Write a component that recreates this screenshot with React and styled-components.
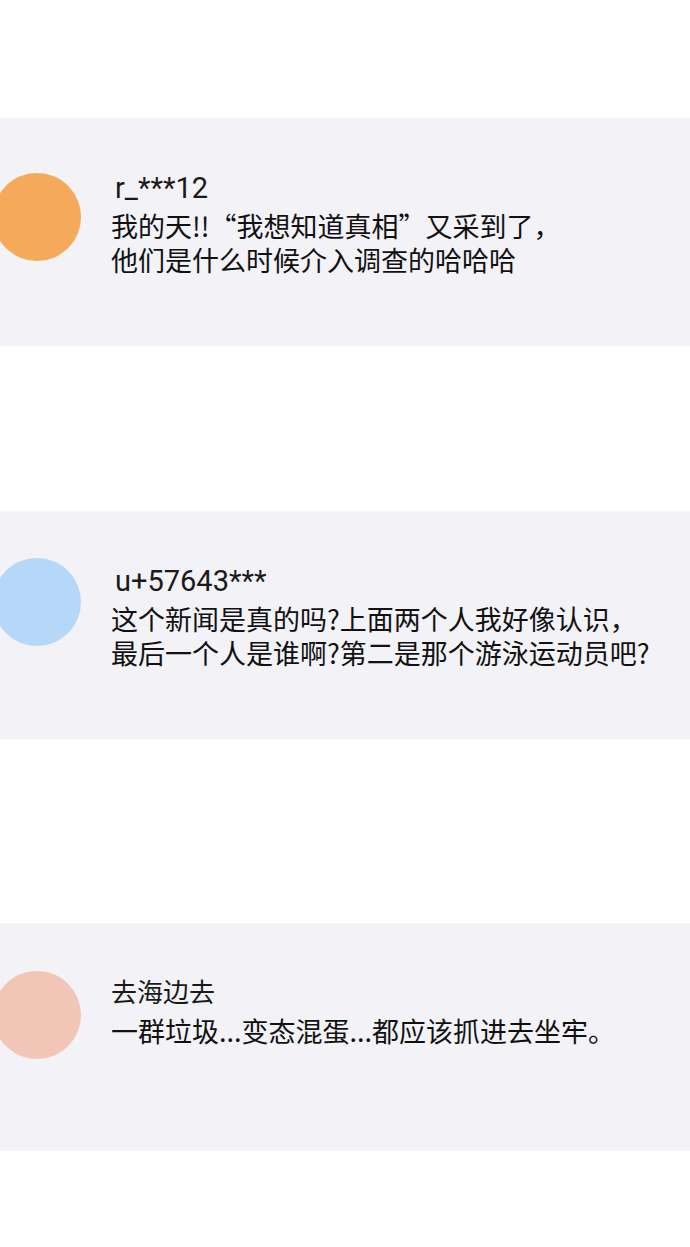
import React from "react";
import styled, { createGlobalStyle } from "styled-components";

const GlobalStyle = createGlobalStyle`
  html, body {
    margin: 0;
    padding: 0;
    background: #ffffff;
  }
  body {
    font-family: "Noto Sans CJK SC", Roboto, sans-serif;
    color: #111111;
  }
`;

const Page = styled.div`
  width: 690px;
  min-height: 1247px;
  overflow: hidden;
  display: flex;
  flex-direction: column;
`;

const Card = styled.div`
  margin-top: ${(p) => p.$space}px;
  height: 228px;
  background: #f2f2f7;
  display: flex;
  align-items: flex-start;
  gap: 30px;
`;

const Avatar = styled.div`
  flex: none;
  width: 88px;
  height: 88px;
  margin-left: -7px;
  margin-top: ${(p) => p.$top}px;
  border-radius: 50%;
  background: ${(p) => p.$color};
`;

const Body = styled.div`
  padding-top: 54px;
  display: flex;
  flex-direction: column;
  gap: 5px;
`;

const Name = styled.div`
  font-family: Roboto, "Noto Sans CJK SC", sans-serif;
  font-size: ${(p) => (p.$latin ? 29 : 26)}px;
  line-height: 32px;
  color: #1a1a1a;
  padding-left: ${(p) => (p.$latin ? 4 : 0)}px;
`;

const Text = styled.p`
  margin: 0;
  font-size: 27px;
  line-height: 34px;
  white-space: nowrap;
`;

const comments = [
  {
    id: 1,
    space: 118,
    top: 55,
    color: "#f4a95b",
    name: "r_***12",
    latin: true,
    lines: ["我的天!!“我想知道真相”又采到了，", "他们是什么时候介入调查的哈哈哈"],
  },
  {
    id: 2,
    space: 165,
    top: 47,
    color: "#b5d7f8",
    name: "u+57643***",
    latin: true,
    lines: ["这个新闻是真的吗?上面两个人我好像认识，", "最后一个人是谁啊?第二是那个游泳运动员吧?"],
  },
  {
    id: 3,
    space: 184,
    top: 48,
    color: "#f2c6b6",
    name: "去海边去",
    latin: false,
    lines: ["一群垃圾...变态混蛋...都应该抓进去坐牢。"],
  },
];

const App = () => {
  return (
    <>
      <GlobalStyle />
      <Page>
        {comments.map((c) => (
          <Card key={c.id} $space={c.space}>
            <Avatar $color={c.color} $top={c.top} />
            <Body>
              <Name $latin={c.latin}>{c.name}</Name>
              <Text>
                {c.lines.map((line, i) => (
                  <React.Fragment key={i}>
                    {i > 0 && <br />}
                    {line}
                  </React.Fragment>
                ))}
              </Text>
            </Body>
          </Card>
        ))}
      </Page>
    </>
  );
};

export default App;
